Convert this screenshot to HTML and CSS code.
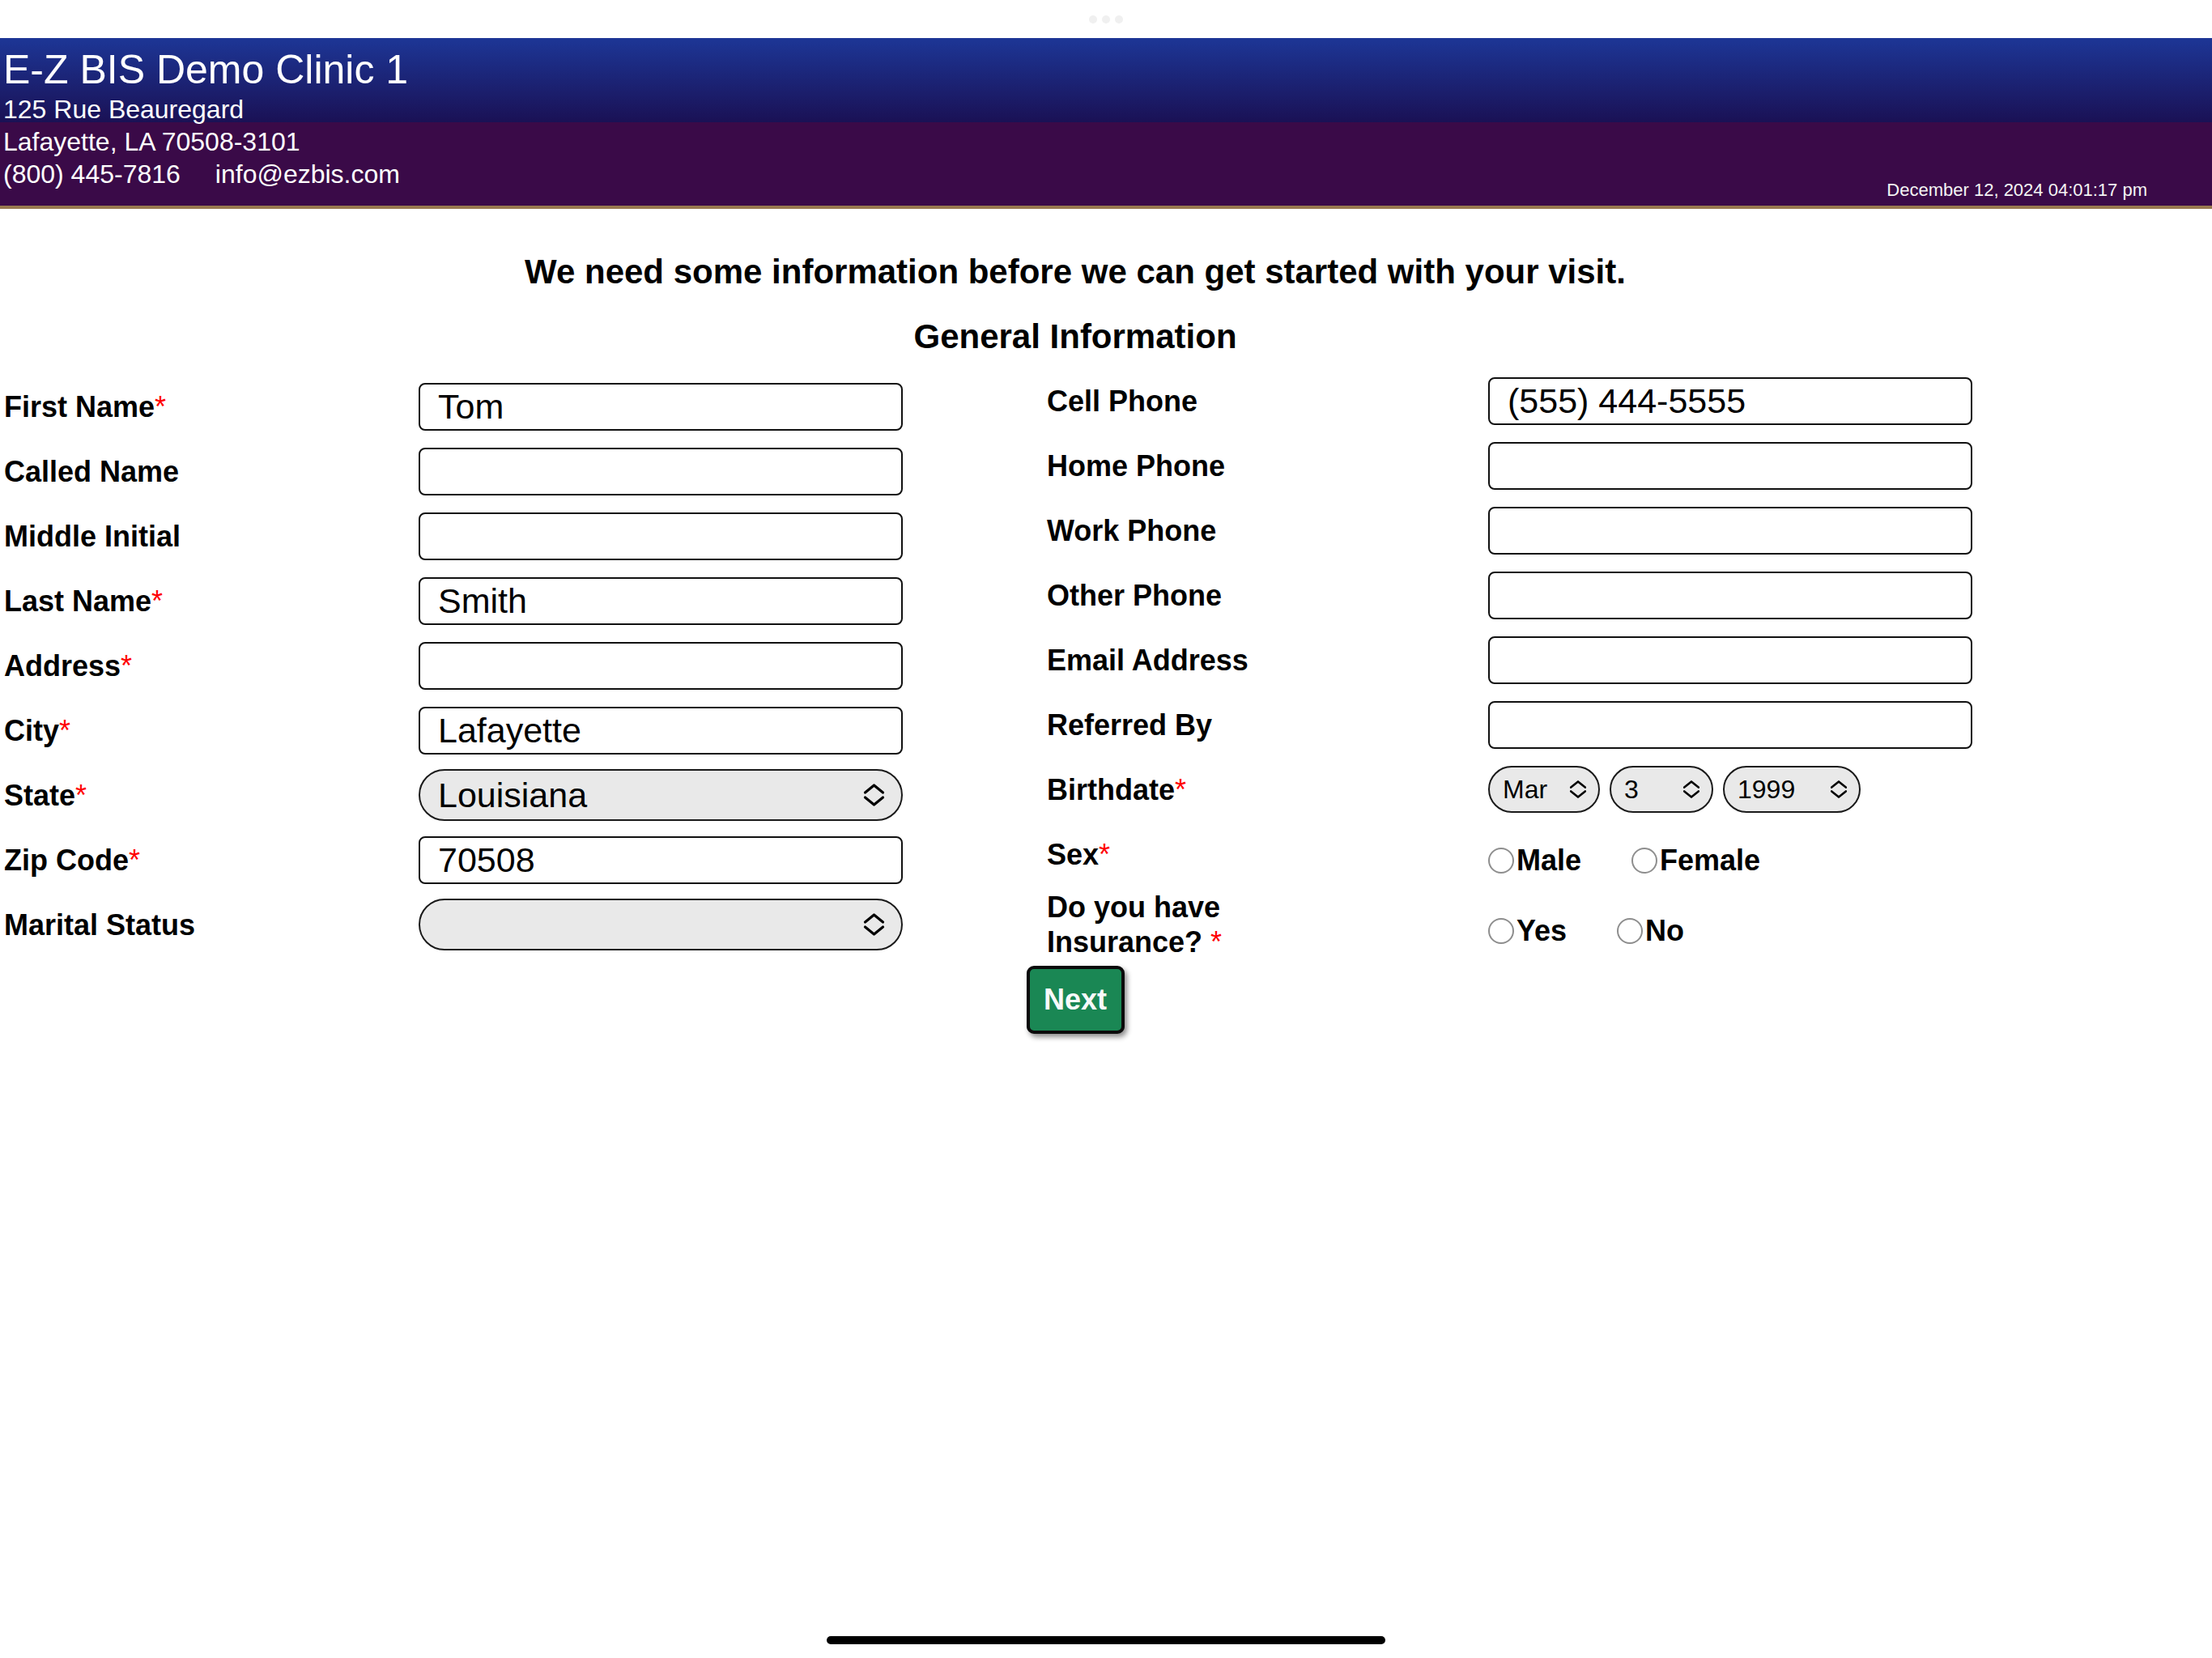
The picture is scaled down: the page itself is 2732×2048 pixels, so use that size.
FILE: index.html
```html
<!DOCTYPE html>
<html lang="en">
<head>
<meta charset="UTF-8">
<title>Patient Check-In</title>
<link rel="stylesheet" href="styles.css">
</head>
<body>
<div class="statusbar">
	<span class="dot"></span><span class="dot"></span><span class="dot"></span>
</div>

<header class="clinic">
	<div class="clinic-info">
		<div class="clinic-name">E-Z BIS Demo Clinic 1</div>
		<div class="clinic-line">125 Rue Beauregard</div>
		<div class="clinic-line">Lafayette, LA 70508-3101</div>
		<div class="clinic-line"><span class="clinic-phone">(800) 445-7816</span>info@ezbis.com</div>
	</div>
	<div class="clinic-date">December 12, 2024 04:01:17 pm</div>
</header>

<main class="page">
	<h1 class="intro">We need some information before we can get started with your visit.</h1>
	<h2 class="section">General Information</h2>

	<form class="form">
		<div class="col col-left">
			<div class="row"><label class="lbl">First Name<span class="req">*</span></label><input class="txt" type="text" value="Tom"></div>
			<div class="row"><label class="lbl">Called Name</label><input class="txt" type="text"></div>
			<div class="row"><label class="lbl">Middle Initial</label><input class="txt" type="text"></div>
			<div class="row"><label class="lbl">Last Name<span class="req">*</span></label><input class="txt" type="text" value="Smith"></div>
			<div class="row"><label class="lbl">Address<span class="req">*</span></label><input class="txt" type="text"></div>
			<div class="row"><label class="lbl">City<span class="req">*</span></label><input class="txt" type="text" value="Lafayette"></div>
			<div class="row"><label class="lbl">State<span class="req">*</span></label>
				<div class="sel sel-big">
					<select><option>Louisiana</option></select>
					<svg class="chev" viewBox="0 0 27 30"><path d="M2.5 12 L13.5 3 L24.5 12 M2.5 18 L13.5 27 L24.5 18"/></svg>
				</div>
			</div>
			<div class="row"><label class="lbl">Zip Code<span class="req">*</span></label><input class="txt" type="text" value="70508"></div>
			<div class="row"><label class="lbl">Marital Status</label>
				<div class="sel sel-big">
					<select><option></option></select>
					<svg class="chev" viewBox="0 0 27 30"><path d="M2.5 12 L13.5 3 L24.5 12 M2.5 18 L13.5 27 L24.5 18"/></svg>
				</div>
			</div>
		</div>

		<div class="col col-right">
			<div class="row"><label class="lbl">Cell Phone</label><input class="txt" type="text" value="(555) 444-5555"></div>
			<div class="row"><label class="lbl">Home Phone</label><input class="txt" type="text"></div>
			<div class="row"><label class="lbl">Work Phone</label><input class="txt" type="text"></div>
			<div class="row"><label class="lbl">Other Phone</label><input class="txt" type="text"></div>
			<div class="row"><label class="lbl">Email Address</label><input class="txt" type="text"></div>
			<div class="row"><label class="lbl">Referred By</label><input class="txt" type="text"></div>
			<div class="row"><label class="lbl">Birthdate<span class="req">*</span></label>
				<div class="dob">
					<div class="sel sel-small sel-month">
						<select><option>Mar</option></select>
						<svg class="chev" viewBox="0 0 27 30"><path d="M2.5 12 L13.5 3 L24.5 12 M2.5 18 L13.5 27 L24.5 18"/></svg>
					</div>
					<div class="sel sel-small sel-day">
						<select><option>3</option></select>
						<svg class="chev" viewBox="0 0 27 30"><path d="M2.5 12 L13.5 3 L24.5 12 M2.5 18 L13.5 27 L24.5 18"/></svg>
					</div>
					<div class="sel sel-small sel-year">
						<select><option>1999</option></select>
						<svg class="chev" viewBox="0 0 27 30"><path d="M2.5 12 L13.5 3 L24.5 12 M2.5 18 L13.5 27 L24.5 18"/></svg>
					</div>
				</div>
			</div>
			<div class="row"><label class="lbl">Sex<span class="req">*</span></label>
				<div class="radios">
					<label class="opt"><input type="radio" name="sex">Male</label>
					<label class="opt"><input type="radio" name="sex">Female</label>
				</div>
			</div>
			<div class="row row-ins"><label class="lbl">Do you have<br>Insurance?&nbsp;<span class="req">*</span></label>
				<div class="radios">
					<label class="opt"><input type="radio" name="ins">Yes</label>
					<label class="opt"><input type="radio" name="ins">No</label>
				</div>
			</div>
		</div>
	</form>

	<div class="actions"><button class="btn-next" type="button">Next</button></div>
</main>

<div class="home-bar"></div>
</body>
</html>
```

FILE: styles.css
```css
* {margin:0; padding:0; box-sizing:border-box;}
body {font-family:"Liberation Sans", Arial, Helvetica, sans-serif; color:#000; background:#fff; width:2732px; min-height:2048px; position:relative;}

.statusbar {height:47px; display:flex; justify-content:center; align-items:center; gap:6px;}
.dot {width:10px; height:10px; border-radius:50%; background:#f0f0f0;}

.clinic {display:flex; justify-content:space-between; padding:0 80px 0 4px; color:#fff; border-bottom:4px solid #98784f;
	background:linear-gradient(to bottom, #1d3696 0, #1a1155 104px, #3a0a48 104px, #3a0a48 100%);}
.clinic-info {padding:11px 0 19px;}
.clinic-name {font-size:50px; line-height:57px;}
.clinic-line {font-size:32px; line-height:40px;}
.clinic-phone {margin-right:43px;}
.clinic-date {align-self:flex-end; font-size:22px; line-height:26px; padding-bottom:6px; color:#f4f4f4;}

.page {width:2656px;}
.intro {margin-top:53px; font-size:42px; line-height:50px; text-align:center;}
.section {margin-top:30px; font-size:42px; line-height:50px; text-align:center;}

.form {display:flex; align-items:flex-start; margin-top:14px; padding-left:5px;}
.col-left {padding-top:7px;}
.col-right {margin-left:178px;}
.row {display:flex; align-items:center; min-height:80px;}
.row-ins {padding-top:4px;}
.lbl {font-size:36px; font-weight:bold; line-height:43px;}
.col-left .lbl {width:512px;}
.col-right .lbl {width:545px;}
.req {color:#f00; font-weight:normal;}

.txt {width:598px; height:59px; border:2px solid #111; border-radius:8px; padding:0 22px; font-family:inherit; font-size:43px; color:#000; background:#fff; outline:none;}

.sel {position:relative; background:#e9e9e9; border:2px solid #1a1a1a; border-radius:40px;}
.sel select {appearance:none; -webkit-appearance:none; border:none; background:transparent; font-family:inherit; color:#000; width:100%; height:100%; outline:none;}
.sel .chev {position:absolute; top:50%; fill:none; stroke:#000; stroke-width:3.2; stroke-linecap:round; stroke-linejoin:round;}
.sel-big {width:598px; height:64px;}
.sel-big select {font-size:43px; padding:0 60px 0 22px;}
.sel-big .chev {right:20px; width:27px; height:30px; margin-top:-15px;}
.sel-small {height:58px;}
.sel-small select {font-size:32px; padding:0 40px 0 16px;}
.sel-small .chev {right:14px; width:22px; height:24px; margin-top:-12px;}
.sel-month {width:138px;}
.sel-day {width:128px;}
.sel-year {width:170px;}
.dob {display:flex; gap:12px;}

.radios {display:flex; padding-top:16px;}
.opt {display:flex; align-items:center; margin-right:62px; font-size:36px; font-weight:bold;}
.opt input {appearance:none; -webkit-appearance:none; width:32px; height:32px; border:2px solid #8e8e8e; border-radius:50%; margin-right:3px; background:#fff;}

.actions {display:flex; justify-content:center; margin-top:8px;}
.btn-next {width:121px; height:84px; background:#1a8754; color:#f8f9fa; border:4px solid #0b0b0b; border-radius:9px; font-family:inherit; font-size:36px; font-weight:bold; box-shadow:3px 4px 6px rgba(0,0,0,0.45);}

.home-bar {position:absolute; left:1021px; top:2021px; width:690px; height:10px; border-radius:5px; background:#000;}
```
